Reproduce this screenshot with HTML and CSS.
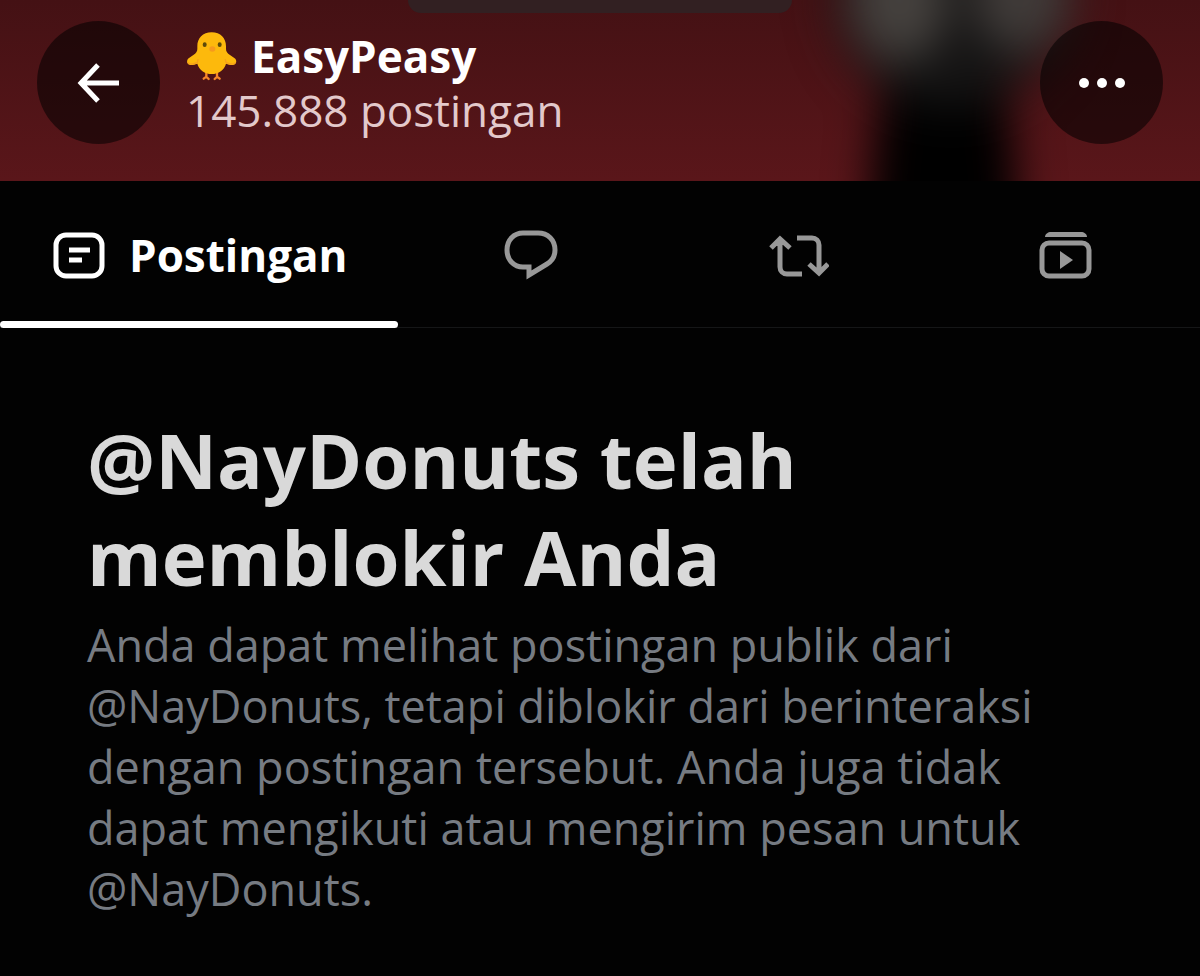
FILE: index.html
```html
<!DOCTYPE html>
<html lang="id">
<head>
  <meta charset="UTF-8">
  <meta name="viewport" content="width=device-width, initial-scale=1.0">
  <title>EasyPeasy</title>
  <link rel="stylesheet" href="styles.css">
</head>
<body>
  <header class="banner">
    <div class="notch"></div>
    <button class="round-btn" type="button" aria-label="Kembali">
      <svg width="44" height="42" viewBox="0 0 44 42" fill="none" stroke="#fff" stroke-width="5">
        <path d="M42 21H4M21 3L4 21l17 18"/>
      </svg>
    </button>
    <div class="profile">
      <h1 class="name">
        <svg class="chick" viewBox="50 36 156 148" aria-hidden="true">
          <path d="M111 158v16M103 178l8-6 7 7M143 158v16M151 178l-8-6-7 7" fill="none" stroke="#f5862a" stroke-width="7" stroke-linecap="round"/>
          <path d="M127 39c-27 0-43 18-43 42v8c0 8-4 13-12 18l-14 10c-8 6-6 20 6 20 8 0 14-2 20-4 5 19 22 31 43 31s38-12 43-31c6 2 12 4 20 4 12 0 14-14 6-20l-14-10c-8-5-12-10-12-18v-8c0-24-16-42-43-42z" fill="#fdb90c"/>
          <path d="M56 130c5 7 18 4 28-1l2-8M198 130c-5 7-18 4-28-1l-2-8" fill="none" stroke="#f6a01c" stroke-width="4" stroke-linecap="round"/>
          <ellipse cx="106" cy="76" rx="6" ry="7" fill="#5c4a0a"/>
          <ellipse cx="151" cy="76" rx="6" ry="7" fill="#5c4a0a"/>
          <ellipse cx="129" cy="89" rx="9" ry="8" fill="#f79a1c"/>
        </svg>
        EasyPeasy
      </h1>
      <p class="count">145.888 postingan</p>
    </div>
    <button class="round-btn" type="button" aria-label="Lainnya">
      <svg width="48" height="12" viewBox="0 0 48 12" fill="#fff">
        <circle cx="6" cy="6" r="5"/>
        <circle cx="24" cy="6" r="5"/>
        <circle cx="42" cy="6" r="5"/>
      </svg>
    </button>
  </header>

  <nav class="tabs">
    <button class="tab active" type="button">
      <svg width="52" height="48" viewBox="0 0 52 48" fill="none" stroke="currentColor" stroke-width="5">
        <rect x="3" y="4" width="46" height="41" rx="10"/>
        <path d="M16 19h21M16 29h13"/>
      </svg>
      Postingan
    </button>
    <button class="tab" type="button" aria-label="Balasan">
      <svg width="54" height="54" viewBox="0 0 54 54" fill="none" stroke="currentColor" stroke-width="5">
        <path d="M19 5h15c10 0 17 7 17 17 0 6-3 11-8 14L25 47V39h-6C10 39 3 32 3 22S10 5 19 5z"/>
      </svg>
    </button>
    <button class="tab" type="button" aria-label="Postingan ulang">
      <svg width="60" height="48" viewBox="0 0 60 48" fill="none" stroke="currentColor" stroke-width="5">
        <path d="M2 17L11 8l10 9M11 9v27c0 4 3 7 7 7h15M28 7h15c4 0 7 3 7 7v28M40 33l10 9 9-9"/>
      </svg>
    </button>
    <button class="tab" type="button" aria-label="Media">
      <svg width="54" height="52" viewBox="0 0 54 52" fill="none" stroke="currentColor" stroke-width="5">
        <path d="M6 8c0-3 3-5 6-5h30c3 0 6 2 6 5z" fill="currentColor" stroke="none"/>
        <rect x="3" y="14" width="47" height="33" rx="7"/>
        <path d="M21 22v18l13-9z" fill="currentColor" stroke="none"/>
      </svg>
    </button>
  </nav>

  <main class="blocked">
    <h2>@NayDonuts telah memblokir Anda</h2>
    <p>Anda dapat melihat postingan publik dari @NayDonuts, tetapi diblokir dari berinteraksi dengan postingan tersebut. Anda juga tidak dapat mengikuti atau mengirim pesan untuk @NayDonuts.</p>
  </main>
</body>
</html>
```
FILE: styles.css
```css
* {
  box-sizing: border-box;
}
body {
  margin: 0;
  background: #020202;
  color: #fff;
  font-family: "Open Sans", "Noto Sans", sans-serif;
}
h1, h2, p {
  margin: 0;
}
button {
  border: none;
  padding: 0;
  color: inherit;
  font: inherit;
  cursor: pointer;
}
.banner {
  position: relative;
  isolation: isolate;
  display: flex;
  align-items: flex-start;
  gap: 26px;
  padding: 21px 37px 37px;
  overflow: hidden;
  background: linear-gradient(#441114, #5a161a);
}
/* blurred figure in the cover photo */
.banner::before {
  content: "";
  position: absolute;
  z-index: -1;
  top: -60px;
  bottom: -60px;
  left: 62%;
  width: 34%;
  background:
    radial-gradient(ellipse 60px 75px at 38% 60px, #45413e 60%, transparent),
    radial-gradient(ellipse 60px 70px at 68% 55px, #403b39 60%, transparent),
    radial-gradient(ellipse 135px 125px at 51% 60px, #151414 70%, transparent),
    radial-gradient(ellipse 85px 300px at 49% 100%, #000 75%, transparent);
  filter: blur(20px);
}
.notch {
  position: absolute;
  top: 0;
  left: 34%;
  right: 34%;
  height: 13px;
  background: #322022;
  border-radius: 0 0 24px 24px;
}
.round-btn {
  display: flex;
  flex: none;
  align-items: center;
  justify-content: center;
  width: 123px;
  height: 123px;
  border-radius: 50%;
  background: rgba(0, 0, 0, 0.54);
}
.profile {
  flex: 1;
  padding-top: 8px;
}
.name {
  display: flex;
  align-items: center;
  gap: 13px;
  font-size: 44px;
  font-weight: 700;
  line-height: 54px;
}
.chick {
  width: 52px;
  height: 50px;
}
.count {
  color: #e3c9cb;
  font-size: 44px;
  line-height: 54px;
}
.tabs {
  display: flex;
  height: 147px;
  padding-top: 2px;
  border-bottom: 1px solid #151617;
}
.tab {
  position: relative;
  display: flex;
  flex: 1;
  align-items: center;
  justify-content: center;
  background: none;
  color: #989898;
}
.tab.active {
  flex: none;
  gap: 24px;
  padding: 0 50px 0 53px;
  color: #fff;
  font-size: 44px;
  font-weight: 700;
}
.tab.active::after {
  content: "";
  position: absolute;
  left: 0;
  right: 0;
  bottom: -1px;
  height: 7px;
  border-radius: 4px;
  background: #fff;
}
.blocked {
  padding: 83px 100px 56px 87px;
}
.blocked h2 {
  max-width: 800px;
  color: #d9d9d9;
  font-size: 76px;
  font-weight: 700;
  line-height: 97px;
}
.blocked p {
  margin-top: 9px;
  color: #767b82;
  font-size: 45px;
  line-height: 61px;
}
```
